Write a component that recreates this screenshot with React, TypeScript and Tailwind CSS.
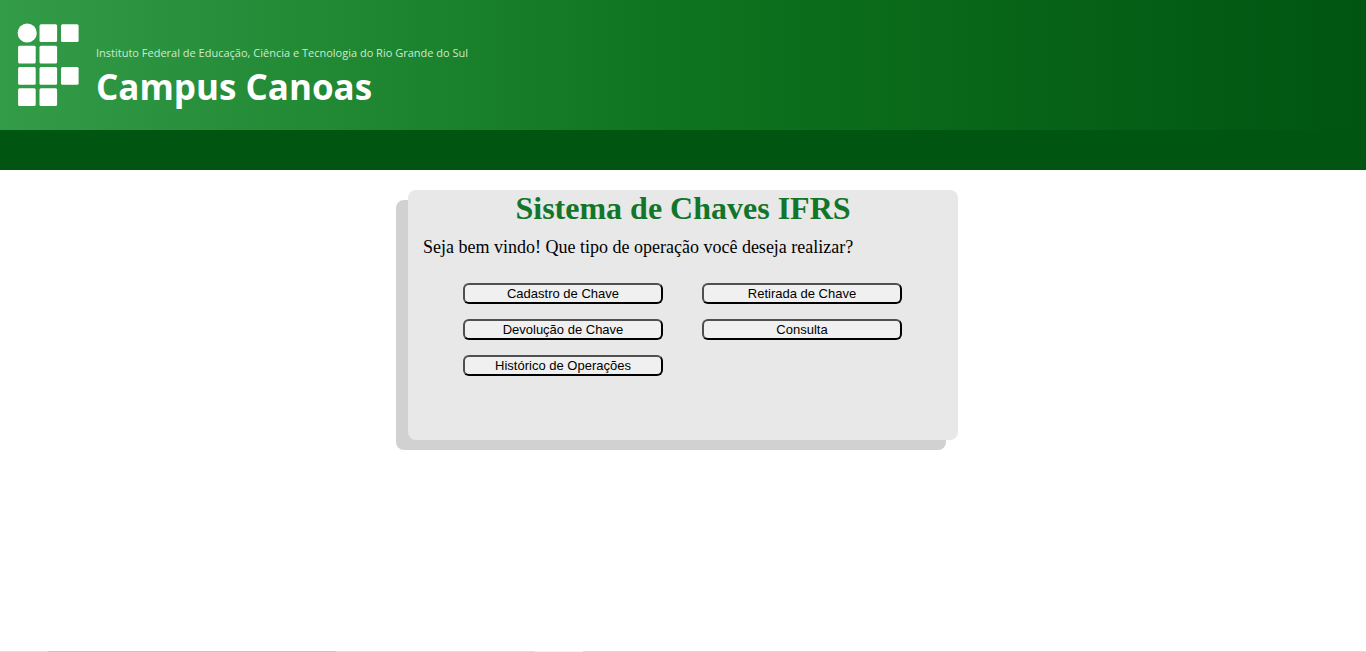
const operations = [
  "Cadastro de Chave",
  "Retirada de Chave",
  "Devolução de Chave",
  "Consulta",
  "Histórico de Operações",
];

const logoSquares = [
  [21.5, 1.3],
  [43, 1.3],
  [0.1, 22.8],
  [21.5, 22.8],
  [0.1, 44],
  [21.5, 44],
  [43, 44],
  [0.1, 65.3],
  [21.5, 65.3],
];

function Logo() {
  return (
    <svg width="61" height="84" viewBox="0 0 61 84" fill="#fff" aria-hidden="true" className="shrink-0 overflow-visible">
      <circle cx="9.2" cy="10" r="9.6" />
      {logoSquares.map(([x, y]) => (
        <rect key={`${x}-${y}`} x={x} y={y} width="17.6" height="17.7" rx="1.5" />
      ))}
    </svg>
  );
}

export default function App() {
  return (
    <div className="flex min-h-screen flex-col bg-white">
      <header>
        <div className="flex h-[130px] items-center bg-linear-to-r/srgb from-[#339c48] via-[#0e731e] to-[#005511] px-[18px]">
          <Logo />
          <div className="ml-[17px] pt-7 font-['Open_Sans',sans-serif] text-white">
            <p className="text-[11px] leading-4 text-[#c9ecce]">
              Instituto Federal de Educação, Ciência e Tecnologia do Rio Grande do Sul
            </p>
            <p className="text-[35px] leading-[52px] font-bold">Campus Canoas</p>
          </div>
        </div>
        <nav className="h-10 bg-[#005511]" />
      </header>
      <main className="flex flex-1 flex-col items-center px-4 py-5">
        <section className="min-h-[250px] w-full max-w-[550px] rounded-lg bg-[#e8e8e8] px-[15px] shadow-[-12px_10px_0_#d1d1d1]">
          <h1 className="text-center font-['Liberation_Serif',serif] text-[32px] leading-9 font-bold text-[#12752a]">
            Sistema de Chaves IFRS
          </h1>
          <p className="mt-[11px] font-['Liberation_Serif',serif] text-lg leading-5 text-black">
            Seja bem vindo! Que tipo de operação você deseja realizar?
          </p>
          <div className="mt-[26px] grid grid-cols-[200px_200px] gap-x-[39px] gap-y-[15px] pl-10">
            {operations.map((label) => (
              <button
                key={label}
                type="button"
                className="h-[21px] rounded-md border-2 border-t-[#4f4f4f] border-r-black border-b-black border-l-[#4f4f4f] bg-[#f0f0f0] font-['Liberation_Sans',sans-serif] text-[13px] leading-[17px] text-black"
              >
                {label}
              </button>
            ))}
          </div>
        </section>
      </main>
      <footer className="flex h-px">
        <div className="w-12 bg-[#d5e0e2]" />
        <div className="w-72 bg-[#c6c6c6]" />
        <div className="w-[199px] bg-[#d5e0e2]" />
        <div className="w-12 bg-[#f0f4f4]" />
        <div className="flex-1 bg-[#d5dce2]" />
      </footer>
    </div>
  );
}
